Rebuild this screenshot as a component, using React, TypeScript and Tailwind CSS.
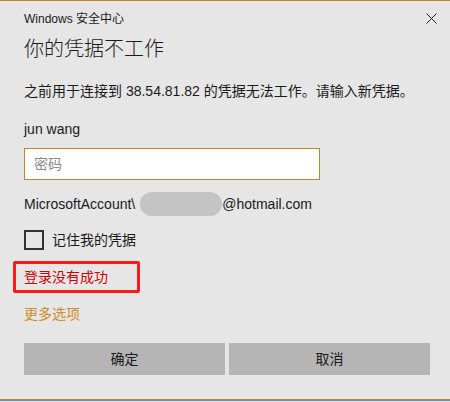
import * as React from "react"

const font = {
  fontFamily: '"Segoe UI", "Liberation Sans", "Noto Sans CJK SC", sans-serif',
}

export default function App() {
  const [remember, setRemember] = React.useState(false)

  return (
    <div
      className="w-[450px] h-[402px] bg-[#e6e6e6] text-[#1a1a1a] flex flex-col border-t border-[#c8822a] overflow-hidden"
      style={font}
    >
      <div className="flex-1 flex flex-col pl-6 pr-5">
        {/* 标题栏 */}
        <div className="flex items-center justify-between h-[34px] pt-[1px]">
          <span className="text-[12px] leading-none">Windows 安全中心</span>
          <svg width="11" height="11" viewBox="0 0 11 11" className="-mr-[7px]">
            <path d="M0.5 0.5 L10.5 10.5 M10.5 0.5 L0.5 10.5" stroke="#222" strokeWidth="1" />
          </svg>
        </div>

        <h1 className="text-[20px] leading-none font-light mt-[4px]">你的凭据不工作</h1>

        <p className="text-[14px] leading-none mt-[25px] whitespace-nowrap">
          之前用于连接到 38.54.81.82 的凭据无法工作。请输入新凭据。
        </p>

        <div className="text-[14px] leading-none mt-[24px]">jun wang</div>

        <input
          className="mt-[12px] w-[296px] h-[32px] bg-white border border-[#c8822a] px-[9px] text-[14px] outline-none placeholder:text-[#8a8a8a]"
          placeholder="密码"
          type="password"
          style={font}
        />

        <div className="flex items-center text-[14px] leading-none mt-[16px] h-[16px]">
          <span>MicrosoftAccount\</span>
          <span className="inline-block ml-[5px] w-[82px] h-[24px] rounded-full bg-[#c4c4c4]" />
          <span>@hotmail.com</span>
        </div>

        <label className="flex items-center gap-[8px] mt-[18px] cursor-pointer">
          <span
            className="w-[20px] h-[20px] border-2 border-[#333] flex items-center justify-center"
            onClick={() => setRemember(!remember)}
          >
            {remember && (
              <svg width="12" height="12" viewBox="0 0 12 12">
                <path d="M1 6 L4.5 9.5 L11 2" stroke="#333" strokeWidth="1.5" fill="none" />
              </svg>
            )}
          </span>
          <span className="text-[14px] leading-none">记住我的凭据</span>
        </label>

        <div className="-ml-[11px] mt-[11px] w-[127px] h-[32px] border-[3px] border-[#ff1a1a] rounded-[2px] flex items-center pl-[8px]">
          <span className="text-[14px] leading-none text-[#cc0000]">登录没有成功</span>
        </div>

        <a className="text-[14px] leading-none text-[#d08a2e] mt-[14px]">更多选项</a>

        <div className="flex gap-[4px] mt-[22px]">
          <button className="flex-1 h-[32px] bg-[#b5b5b5] text-[14px]" style={font}>
            确定
          </button>
          <button className="flex-1 h-[32px] bg-[#b5b5b5] text-[14px]" style={font}>
            取消
          </button>
        </div>
      </div>
      <div className="h-[1px] bg-[#c8822a]" />
      <div className="h-[1px] bg-[#7a8aa8]" />
      <div className="h-[1px] bg-[#dde6f2]" />
    </div>
  )
}
